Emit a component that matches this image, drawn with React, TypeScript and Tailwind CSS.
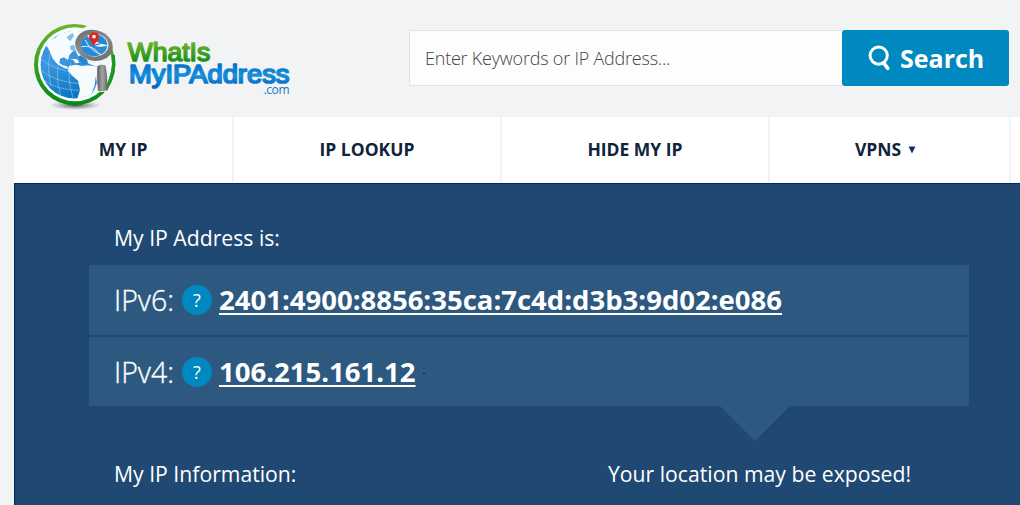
import React from "react";

function Logo() {
  return (
    <svg width="280" height="110" viewBox="0 0 280 110" className="block shrink-0" aria-label="WhatIsMyIPAddress.com">
      <defs>
        <linearGradient id="ring" x1="0" y1="0" x2="0" y2="1">
          <stop offset="0" stopColor="#6ab52f" />
          <stop offset="1" stopColor="#058a14" />
        </linearGradient>
        <linearGradient id="sea" x1="0" y1="0" x2="0.3" y2="1">
          <stop offset="0" stopColor="#2f8fdc" />
          <stop offset="0.5" stopColor="#3a96de" />
          <stop offset="1" stopColor="#0f76c4" />
        </linearGradient>
        <linearGradient id="metal" x1="0" y1="0" x2="1" y2="1">
          <stop offset="0" stopColor="#666" />
          <stop offset="0.45" stopColor="#8c8c8c" />
          <stop offset="1" stopColor="#666" />
        </linearGradient>
        <linearGradient id="handle" x1="0" y1="0" x2="1" y2="0">
          <stop offset="0" stopColor="#5c5c5c" />
          <stop offset="0.5" stopColor="#a5a5a5" />
          <stop offset="1" stopColor="#707070" />
        </linearGradient>
        <radialGradient id="shade">
          <stop offset="0" stopColor="#333" stopOpacity="0.85" />
          <stop offset="1" stopColor="#777" stopOpacity="0" />
        </radialGradient>
        <linearGradient id="greenText" gradientUnits="userSpaceOnUse" x1="0" y1="32" x2="0" y2="53">
          <stop offset="0" stopColor="#6eb42a" />
          <stop offset="1" stopColor="#118d17" />
        </linearGradient>
        <linearGradient id="blueText" gradientUnits="userSpaceOnUse" x1="0" y1="54" x2="0" y2="77">
          <stop offset="0" stopColor="#0870c8" />
          <stop offset="0.5" stopColor="#1590dc" />
          <stop offset="1" stopColor="#0a66bd" />
        </linearGradient>
        <clipPath id="globe"><circle cx="163" cy="164" r="102" /></clipPath>
        <clipPath id="lens"><ellipse cx="222" cy="106" rx="40" ry="33" /></clipPath>
      </defs>
      <g transform="scale(0.33333)">
        <ellipse cx="166" cy="286" rx="78" ry="14" fill="url(#shade)" />
        <circle cx="164" cy="164" r="122" fill="url(#ring)" />
        <circle cx="165" cy="163" r="111" fill="#fbfdfe" />
        <g clipPath="url(#globe)">
          <circle cx="163" cy="164" r="102" fill="url(#sea)" />
          <g fill="none" stroke="#a5d3f2" strokeWidth="1.6">
            <path d="M60 145Q98 179 176 190M59 177Q100 216 187 222M68 208Q105 242 190 241M98 108Q76 160 93 229M126 126Q100 183 122 257M152 158Q140 205 159 263" />
          </g>
          <path d="M72 100L92 76L125 56L190 52L190 110L172 118L156 126L148 136L144 150L132 142L120 146L118 158L128 166L140 168L146 178L132 174L112 162L98 146L90 126L84 114Z" fill="#f6fbfe" />
          <path d="M84 92L104 74L120 70L106 84ZM140 82L158 68L162 78L150 94ZM150 108L160 104L168 112L164 124L152 120Z" fill="#7fbdec" />
          <path d="M146 168L168 164L186 168L204 166L232 170L250 270L170 272L180 240L174 212L154 194L144 182Z" fill="#f6fbfe" />
          <path d="M150 146L160 150L166 160L178 158L172 148Z" fill="#f6fbfe" />
          <path d="M214 254L224 226L227 200L232 216L224 237Z" fill="#2e8fe0" />
        </g>
        <path d="M214 43L278 82L284 105L251 138L270 151L263 245L231 246L229 171L204 160Q168 148 164 106Q170 57 214 43Z" fill="#f4f7f9" />
        <path d="M174 140L182 136L202 150L204 163L190 162Z" fill="#2583d2" />
        <path d="M280 136Q287 188 257 240" fill="none" stroke="#1a981d" strokeWidth="10" />
        <path d="M233 169Q244 163 255 167Q262 190 261 240L235 242Q230 206 233 169Z" fill="url(#handle)" stroke="#666" strokeWidth="2" />
        <ellipse cx="222" cy="106" rx="57" ry="46" fill="url(#metal)" transform="rotate(14 222 106)" />
        <ellipse cx="224" cy="106" rx="41" ry="34" fill="#e9f6fd" />
        <g clipPath="url(#lens)">
          <path d="M180 91L202 77L217 98L224 108L240 110L266 108L266 142L180 142Z" fill="#2a8ad6" />
          <path d="M230 70L264 80L263 106L238 100L228 92Z" fill="#2389d1" />
          <path d="M184 110Q216 104 235 128T260 132M196 90Q210 124 250 136" fill="none" stroke="#d5edf9" strokeWidth="3" />
          <path d="M218 107L241 101" stroke="#234e77" strokeWidth="3" />
        </g>
        <path d="M221 108C216 98 207 92 207 82A15 15 0 0 1 237 82C237 92 226 98 221 108Z" fill="#df251c" />
        <circle cx="222" cy="80" r="5.5" fill="#fff1e8" />
      </g>
      <text x="107.7" y="51" textLength="82.5" lengthAdjust="spacingAndGlyphs" fontFamily="Liberation Sans, sans-serif" fontSize="25" fill="url(#greenText)" stroke="url(#greenText)" strokeWidth="1.5" strokeLinejoin="round">WhatIs</text>
      <text x="109" y="73" textLength="160.5" lengthAdjust="spacingAndGlyphs" fontFamily="Liberation Sans, sans-serif" fontSize="25" fill="url(#blueText)" stroke="url(#blueText)" strokeWidth="1.7" strokeLinejoin="round">MyIPAddress</text>
      <text x="243.5" y="83.5" textLength="26" fontFamily="Open Sans, sans-serif" fontSize="12" fill="#1779bd">.com</text>
    </svg>
  );
}

function Header() {
  return (
    <header className="flex h-[117px] pl-5 pt-[10px]">
      <Logo />
      <form className="ml-[109px] mt-5 flex h-14 w-[600px]">
        <div className="flex w-[433px] items-center border border-r-0 border-[#e1e3e5] bg-[#fdfdfd] pl-[15px] text-[18px] font-light text-[#444]">
          <span className="tracking-[-0.22px]">Enter Keywords or IP Address...</span>
        </div>
        <button type="button" className="flex w-[167px] items-center rounded-[3px] bg-[#0088c0] pl-[26px] text-white">
          <svg width="24" height="27" viewBox="0 0 24 27" fill="none" stroke="currentColor" strokeWidth="3">
            <circle cx="10.7" cy="10.6" r="8.6" />
            <path d="M15.8 18.2L19.8 23.4" strokeWidth="3.6" strokeLinecap="round" />
          </svg>
          <span className="ml-2 text-[25px] font-bold leading-none">Search</span>
        </button>
      </form>
    </header>
  );
}

function Nav() {
  const item = "flex items-center justify-center bg-white";
  return (
    <nav className="ml-[14px] grid h-[66px] grid-cols-[218px_266px_266px_239px_1fr] gap-x-[2px] border-b border-[#fbfbfb] text-[17.5px] font-bold text-[#10243b]">
      <a className={item}>MY IP</a>
      <a className={item}>IP LOOKUP</a>
      <a className={item}>HIDE MY IP</a>
      <a className="flex items-center justify-center bg-white pr-[8px]">
        VPNS
        <svg width="8" height="8" viewBox="0 0 8 8" className="ml-[7px] mt-px"><path d="M0.5 0.5H7.5L4 7.5Z" fill="#123169" /></svg>
      </a>
      <span className="bg-white" />
    </nav>
  );
}

function AddressRow({ label, value, mark = false }: { label: string; value: string; mark?: boolean }) {
  const shift = mark ? "mt-px" : "-mt-px";
  return (
    <div className="flex h-full items-center bg-[#2d5980] pl-[25px] text-[27.5px]">
      <span className={`${shift} w-[68px] whitespace-nowrap text-[28.5px] font-light [-webkit-text-stroke:0.35px_white]`}>{label}</span>
      <span className="flex size-[30px] items-center justify-center rounded-full bg-[#0088c0] text-[18px]">?</span>
      <a className={`${shift} ml-[7px] whitespace-nowrap font-bold underline decoration-2 underline-offset-[3px]`}>{value}</a>
      {mark && <span className="ml-[7px] mt-1 h-px w-[2px] bg-[#0000e8]" />}
    </div>
  );
}

export default function App() {
  return (
    <div className="h-[505px] w-[1020px] overflow-hidden bg-[#f1f3f5] font-['Open_Sans',sans-serif]">
      <Header />
      <Nav />
      <main className="ml-[14px] h-[322px] border-l border-t border-[#002a5c] bg-[#1f4972] pl-[74px] pt-[38px] text-[21.2px] leading-8 text-white">
        <h1 className="ml-[25px] h-8">My IP Address is:</h1>
        <section className="mt-[11px] grid h-[141px] w-[880px] grid-rows-[70px_69px] gap-[2px]">
          <AddressRow label="IPv6:" value="2401:4900:8856:35ca:7c4d:d3b3:9d02:e086" />
          <AddressRow label="IPv4:" value="106.215.161.12" mark />
        </section>
        <svg width="70" height="35" viewBox="0 0 70 35" className="ml-[631px] block"><path d="M0 0H70L35 35Z" fill="#2d5980" /></svg>
        <div className="ml-[25px] mt-[17px] flex">
          <h2 className="w-[494px]">My IP Information:</h2>
          <h2>Your location may be exposed!</h2>
        </div>
      </main>
    </div>
  );
}
